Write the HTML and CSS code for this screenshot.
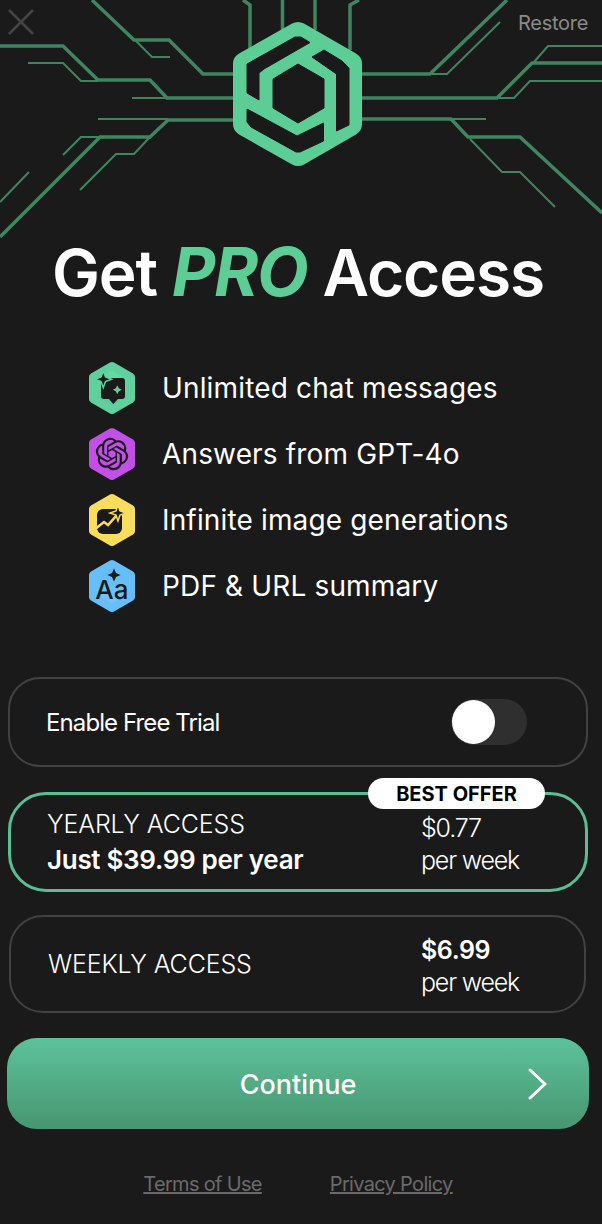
FILE: index.html
```html
<!DOCTYPE html>
<html>
<head>
    <meta charset="UTF-8">
    <meta name="viewport" content="width=device-width, initial-scale=1.0">
    <title>Get PRO Access</title>
    <link rel="stylesheet" href="styles.css">
</head>
<body>
    <header class="hero">
        <svg class="circuit" width="602" height="240" viewBox="0 0 602 240">
            <g class="trace-thick">
                <path d="M92 0L134 40H169L203 74H240"/>
                <path d="M0 46H63L98 80H150L167 98H240"/>
                <path d="M0 237L100 137H150L168 120H240"/>
                <path d="M243 0L250 5V50"/>
                <path d="M282.500 0V30"/>
                <path d="M315 0V30"/>
                <path d="M359 0L350 5V50"/>
                <path d="M507 0L430 74H360"/>
                <path d="M602 63H532L497 98H360"/>
                <path d="M602 213L520 137H468L451 119H360"/>
            </g>
            <g class="trace-thin">
                <path d="M136 41L152 57H170"/>
                <path d="M28 63H63L81 81H98"/>
                <path d="M132 98H167"/>
                <path d="M98 119H168"/>
                <path d="M63 155L81 137H99"/>
                <path d="M80 190L116 154H134L150 137"/>
                <path d="M29 172L0 202"/>
                <path d="M432 74H447L500 22"/>
                <path d="M499 98H514L530 81H602"/>
                <path d="M534 62L548 46H602"/>
                <path d="M451 119H486"/>
                <path d="M470 139L502 172H520L555 207"/>
            </g>
            <!-- logo -->
            <path class="logo-body" d="M298 34L350 64V124L298 154L245 124V64Z"/>
            <g class="logo-cut">
                <path d="M247 64L295 37H301L310 42.500L264 69L259 73V100L247 93Z"/>
                <path d="M312 57L324 50L342 61L349 68V125L336.500 131V74Z"/>
                <path d="M247 109L297 136L323.500 123V141L300 152H296L251 127L247 122Z"/>
                <path class="logo-centre" d="M298 64L324 79V108L298 123L273 108V79Z"/>
            </g>
        </svg>
        <svg class="close-icon" width="26" height="26" viewBox="0 0 26 26">
            <path d="M1 1L25 25M25 1L1 25"/>
        </svg>
        <span class="restore">Restore</span>
    </header>

    <main class="content">
        <h1 class="title">Get <em>PRO</em> Access</h1>

        <ul class="features">
            <li class="feature">
                <svg class="feature-icon" width="48" height="54" viewBox="-24 -27 48 54">
                    <defs>
                        <linearGradient id="greenFill" x1="0" y1="0" x2="0" y2="1">
                            <stop offset="0" stop-color="#6adcaa"/>
                            <stop offset="1" stop-color="#55c795"/>
                        </linearGradient>
                        <linearGradient id="blueFill" x1="0" y1="0" x2="0" y2="1">
                            <stop offset="0" stop-color="#5cb8f5"/>
                            <stop offset="1" stop-color="#74c9fc"/>
                        </linearGradient>
                    </defs>
                    <path class="hex hex-green" d="M0 -22L19 -11V11L0 22L-19 11V-11Z"/>
                    <path class="glyph" d="M-8 -10H10Q13 -10 13 -7V8Q13 11 10 11H6L1.300 16L-3 11H-8Q-11 11 -11 8V-7Q-11 -10 -8 -10Z"/>
                    <path class="spark-green" d="M-8.700 -17L-6.500 -11L-0.500 -8.700L-6.500 -6.500L-8.700 -0.500L-11 -6.500L-17 -8.700L-11 -11Z"/>
                    <path class="spark-inner" d="M5.300 -2.800L6.800 0.200L9.800 1.700L6.800 3.200L5.300 6.200L3.800 3.200L0.800 1.700L3.800 0.200Z"/>
                </svg>
                <span>Unlimited chat messages</span>
            </li>
            <li class="feature">
                <svg class="feature-icon" width="48" height="54" viewBox="-24 -27 48 54">
                    <path class="hex hex-purple" d="M0 -22L19 -11V11L0 22L-19 11V-11Z"/>
                    <path class="glyph" transform="translate(-16.200 -16.200) scale(1.350)" d="M22.2819 9.8211a5.9847 5.9847 0 0 0-.5157-4.9108 6.0462 6.0462 0 0 0-6.5098-2.9A6.0651 6.0651 0 0 0 4.9807 4.1818a5.9847 5.9847 0 0 0-3.9977 2.9 6.0462 6.0462 0 0 0 .7427 7.0966 5.98 5.98 0 0 0 .511 4.9107 6.051 6.051 0 0 0 6.5146 2.9001A5.9847 5.9847 0 0 0 13.2599 24a6.0557 6.0557 0 0 0 5.7718-4.2058 5.9894 5.9894 0 0 0 3.9977-2.9001 6.0557 6.0557 0 0 0-.7475-7.0729zm-9.022 12.6081a4.4755 4.4755 0 0 1-2.8764-1.0408l.1419-.0804 4.7783-2.7582a.7948.7948 0 0 0 .3927-.6813v-6.7369l2.02 1.1686a.071.071 0 0 1 .038.052v5.5826a4.504 4.504 0 0 1-4.4945 4.4944zm-9.6607-4.1254a4.4708 4.4708 0 0 1-.5346-3.0137l.142.0852 4.783 2.7582a.7712.7712 0 0 0 .7806 0l5.8428-3.3685v2.3324a.0804.0804 0 0 1-.0332.0615L9.74 19.9502a4.4992 4.4992 0 0 1-6.1408-1.6464zM2.3408 7.8956a4.485 4.485 0 0 1 2.3655-1.9728V11.6a.7664.7664 0 0 0 .3879.6765l5.8144 3.3543-2.0201 1.1685a.0757.0757 0 0 1-.071 0l-4.8303-2.7865A4.504 4.504 0 0 1 2.3408 7.872zm16.5963 3.8558L13.1038 8.364 15.1192 7.2a.0757.0757 0 0 1 .071 0l4.8303 2.7913a4.4944 4.4944 0 0 1-.6765 8.1042v-5.6772a.79.79 0 0 0-.407-.667zm2.0107-3.0231l-.142-.0852-4.7735-2.7818a.7759.7759 0 0 0-.7854 0L9.409 9.2297V6.8974a.0662.0662 0 0 1 .0284-.0615l4.8303-2.7866a4.4992 4.4992 0 0 1 6.6802 4.66zM8.3065 12.863l-2.02-1.1638a.0804.0804 0 0 1-.038-.0567V6.0742a4.4992 4.4992 0 0 1 7.3757-3.4537l-.142.0805L8.704 5.459a.7948.7948 0 0 0-.3927.6813zm1.0976-2.3654l2.602-1.4998 2.6069 1.4998v2.9994l-2.5974 1.4997-2.6067-1.4997Z"/>
                </svg>
                <span>Answers from GPT-4o</span>
            </li>
            <li class="feature">
                <svg class="feature-icon" width="48" height="54" viewBox="-24 -27 48 54">
                    <path class="hex hex-yellow" d="M0 -22L19 -11V11L0 22L-19 11V-11Z"/>
                    <rect class="glyph" x="-15" y="-11" width="25" height="25" rx="6"/>
                    <path class="chart-line" d="M-17 9L-8 2L-4 5L5 -5"/>
                    <path class="spark-yellow" d="M6 -15L8 -9L14 -7L8 -5L6 1L4 -5L-2 -7L4 -9Z"/>
                </svg>
                <span>Infinite image generations</span>
            </li>
            <li class="feature">
                <svg class="feature-icon" width="48" height="54" viewBox="-24 -27 48 54">
                    <path class="hex hex-blue" d="M0 -22L19 -11V11L0 22L-19 11V-11Z"/>
                    <path class="glyph" d="M2 -17.500L4 -13L8.500 -11L4 -9L2 -4.500L0 -9L-4.500 -11L0 -13Z"/>
                    <text class="icon-letters" x="0" y="13" text-anchor="middle">Aa</text>
                </svg>
                <span>PDF &amp; URL summary</span>
            </li>
        </ul>

        <section class="options">
            <div class="card trial">
                <span>Enable Free Trial</span>
                <div class="toggle"><div class="knob"></div></div>
            </div>

            <div class="card plan plan-active">
                <span class="badge">BEST OFFER</span>
                <div class="plan-name">
                    <div>YEARLY ACCESS</div>
                    <div class="strong-big">Just $39.99 per year</div>
                </div>
                <div class="plan-price">
                    <div>$0.77</div>
                    <div>per week</div>
                </div>
            </div>

            <div class="card plan plan-weekly">
                <div class="plan-name">
                    <div>WEEKLY ACCESS</div>
                </div>
                <div class="plan-price">
                    <div class="strong">$6.99</div>
                    <div>per week</div>
                </div>
            </div>

            <button class="continue">
                <span>Continue</span>
                <svg class="chevron" width="20" height="32" viewBox="0 0 20 32">
                    <path d="M2 2L17 16L2 30"/>
                </svg>
            </button>
        </section>

        <footer class="links">
            <a href="#">Terms of Use</a>
            <a href="#">Privacy Policy</a>
        </footer>
    </main>
</body>
</html>
```

FILE: styles.css
```css
* {
    box-sizing: border-box;
}

html, body {
    height: 100%;
}

body {
    margin: 0;
    background: #1a1a1a;
    color: white;
    font-family: Inter, "Liberation Sans", sans-serif;
    overflow: hidden;
}

/* top artwork */
.hero {
    position: relative;
    height: 240px;
}

.circuit {
    display: block;
}

.trace-thick path, .trace-thin path {
    fill: none;
    stroke: #3f8560;
    stroke-linejoin: miter;
}

.trace-thick path {
    stroke-width: 3.500;
}

.trace-thin path {
    stroke-width: 2;
}

.logo-body {
    fill: #5dcd96;
    stroke: #5dcd96;
    stroke-width: 24;
    stroke-linejoin: round;
}

.logo-cut path {
    fill: #1a1a1a;
    stroke: #1a1a1a;
    stroke-width: 1;
    stroke-linejoin: round;
}

.close-icon {
    position: absolute;
    top: 9px;
    left: 8px;
}

.close-icon path {
    fill: none;
    stroke: #454545;
    stroke-width: 2.500;
}

.restore {
    position: absolute;
    top: 10px;
    right: 14px;
    font-size: 20px;
    line-height: 26px;
    letter-spacing: -0.3px;
    color: #8a8a8a;
}

.content {
    padding: 0 14px 0 8px;
}

.title {
    margin: 0;
    height: 64px;
    font-size: 64px;
    font-weight: 600;
    line-height: 64px;
    letter-spacing: -1.15px;
    text-align: center;
}

.title em {
    color: #5dcd96;
    font-size: 67px;
    font-weight: 700;
}

/* feature list */
.features {
    list-style: none;
    margin: 51px 0 0;
    padding: 0 0 0 80px;
}

.feature {
    display: flex;
    align-items: center;
    gap: 26px;
    height: 66px;
    font-size: 28px;
    letter-spacing: 0.15px;
}

.feature-icon {
    flex: none;
}

.hex {
    stroke-width: 8;
    stroke-linejoin: round;
}

.hex-green {
    fill: url(#greenFill);
    stroke: #60d09f;
}

.hex-purple {
    fill: #c24fe6;
    stroke: #c24fe6;
}

.hex-yellow {
    fill: #fbdd5e;
    stroke: #fbdd5e;
}

.hex-blue {
    fill: url(#blueFill);
    stroke: #66bff8;
}

.glyph {
    fill: #1a1a1a;
}

.spark-green {
    fill: #1a1a1a;
    stroke: #60d09f;
    stroke-width: 1.500;
}

.spark-inner {
    fill: #60d09f;
}

.spark-yellow {
    fill: #1a1a1a;
    stroke: #fbdd5e;
    stroke-width: 1.500;
}

.chart-line {
    fill: none;
    stroke: #fbdd5e;
    stroke-width: 2.500;
}

.icon-letters {
    font-size: 26px;
    font-weight: 500;
    fill: #1a1a1a;
}

/* plans */
.options {
    margin-top: 58px;
    display: flex;
    flex-direction: column;
}

.card {
    border: 2px solid #424242;
    font-size: 25px;
    position: relative;
}

.trial {
    height: 90px;
    border-radius: 32px;
    display: flex;
    align-items: center;
    justify-content: space-between;
    padding: 0 59px 0 36px;
    font-size: 24px;
    letter-spacing: -0.9px;
}

.toggle {
    width: 76px;
    height: 46px;
    border-radius: 23px;
    background: #2f2f2f;
    padding: 1px;
}

.knob {
    width: 43px;
    height: 44px;
    border-radius: 50%;
    background: white;
}

.plan {
    display: grid;
    grid-template-columns: 374px 1fr;
    align-items: center;
    padding-left: 36px;
    font-weight: 300;
}

.plan-name {
    line-height: 36px;
    letter-spacing: -0.15px;
}

.plan-price {
    margin-top: 3px;
    font-size: 25px;
    line-height: 32px;
    letter-spacing: -1.2px;
}

.plan-active {
    margin-top: 25px;
    height: 100px;
    border: 3px solid #5bbd96;
    border-radius: 38px;
}

.plan-weekly {
    margin: 23px 2px 0 1px;
    height: 98px;
    border-radius: 34px;
    padding-left: 37px;
    grid-template-columns: 373px 1fr;
}

.strong {
    font-weight: 600;
    letter-spacing: -0.4px;
}

.strong-big {
    font-size: 26px;
    font-weight: 600;
    letter-spacing: -0.3px;
}

.badge {
    position: absolute;
    top: -17px;
    left: 357px;
    width: 177px;
    height: 31px;
    border-radius: 16px;
    background: white;
    color: black;
    font-size: 20px;
    font-weight: 700;
    line-height: 33px;
    text-align: center;
    letter-spacing: 0;
}

.continue {
    position: relative;
    margin: 25px -1px 0;
    height: 91px;
    padding-top: 2px;
    border: none;
    border-radius: 30px;
    background: linear-gradient(#5cc29b, #479670);
    color: white;
    font-family: inherit;
    font-size: 27px;
    font-weight: 500;
}

.chevron {
    position: absolute;
    right: 41px;
    top: 30px;
}

.chevron path {
    fill: none;
    stroke: white;
    stroke-width: 3;
    stroke-linecap: round;
    stroke-linejoin: round;
}

.links {
    margin-top: 42px;
    display: flex;
    justify-content: center;
    gap: 68px;
    font-size: 20px;
    line-height: 26px;
}

.links a {
    color: #6b6b6b;
    letter-spacing: -0.68px;
}
```
